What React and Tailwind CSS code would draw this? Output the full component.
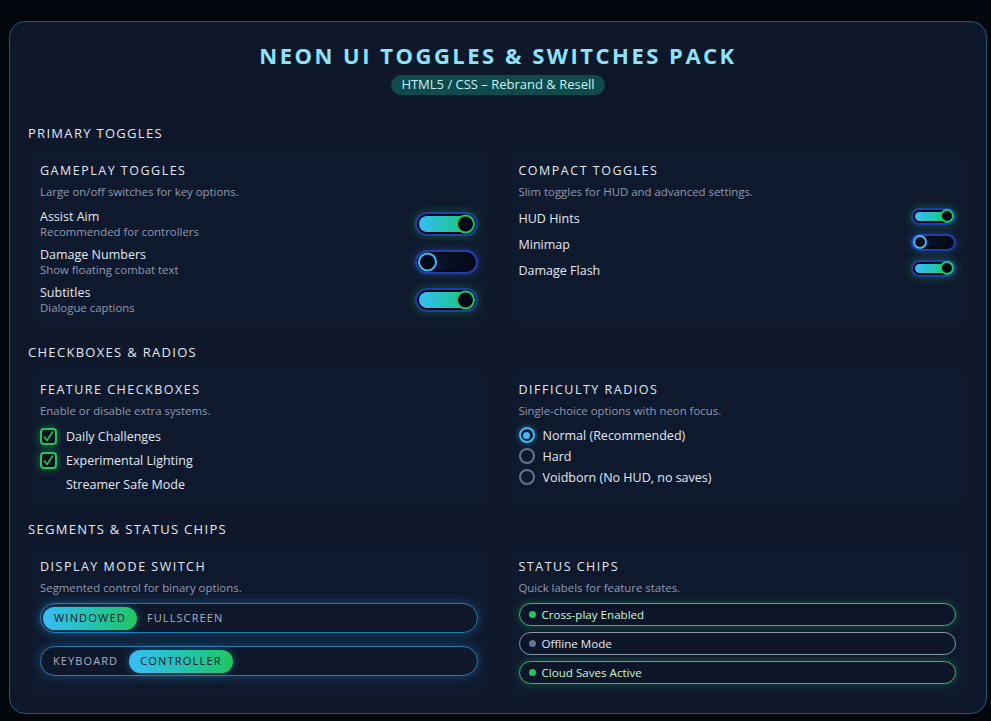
import React from "react";

const font = { fontFamily: '"Open Sans", "Noto Sans", sans-serif' };

function BigToggle({ on }) {
  return (
    <div
      className={`relative w-[63px] h-[24px] rounded-full border-2 border-[#1e3fa6] bg-[#030816] p-[2px] shrink-0 ${
        on ? "shadow-[0_0_10px_rgba(34,197,94,0.35)]" : "shadow-[0_0_10px_rgba(56,130,246,0.35)]"
      }`}
    >
      <div
        className={`h-full w-full rounded-full ${
          on ? "bg-gradient-to-r from-[#38bdf8] to-[#22c55e]" : "bg-gradient-to-r from-[#0c1733] to-[#030816]"
        }`}
      />
      <div
        className={`absolute top-1/2 -translate-y-1/2 w-[19px] h-[19px] rounded-full bg-[#020617] border-2 ${
          on ? "right-[1px] border-[#22c55e]" : "left-[1px] border-[#38bdf8]"
        }`}
      />
    </div>
  );
}

function SmallToggle({ on }) {
  return (
    <div
      className={`relative w-[45px] h-[17px] rounded-full border-2 border-[#1e3fa6] bg-[#030816] p-[2px] shrink-0 ${
        on ? "shadow-[0_0_10px_rgba(34,197,94,0.4)]" : "shadow-[0_0_10px_rgba(56,130,246,0.35)]"
      }`}
    >
      <div
        className={`h-full w-full rounded-full ${
          on ? "bg-gradient-to-r from-[#38bdf8] to-[#22c55e]" : "bg-gradient-to-r from-[#0c1733] to-[#030816]"
        }`}
      />
      <div
        className={`absolute top-1/2 -translate-y-1/2 w-[14px] h-[14px] rounded-full bg-[#020617] border-2 ${
          on ? "right-[0px] border-[#22c55e]" : "left-[0px] border-[#38bdf8]"
        }`}
      />
    </div>
  );
}

function SectionTitle({ children, className = "" }) {
  return (
    <div className={`text-[13px] leading-[16px] tracking-[1.3px] text-[#e2e8f0] ${className}`}>{children}</div>
  );
}

function Card({ title, desc, children }) {
  return (
    <div className="rounded-[10px] bg-[#0f192d] px-[12px] pt-[12px] pb-[12px]">
      <div className="mt-[1px] text-[12.5px] leading-[16px] tracking-[1.5px] text-[#e2e8f0]">{title}</div>
      <div className="mt-[5px] text-[11.4px] leading-[15px] text-[#8f9bb0]">{desc}</div>
      <div className="mt-[10px]">{children}</div>
    </div>
  );
}

function Check({ on }) {
  return (
    <div
      className={`w-[17px] h-[17px] rounded-[4px] border-2 flex items-center justify-center shrink-0 ${
        on
          ? "border-[#22c55e] bg-[#07131c] shadow-[0_0_8px_rgba(34,197,94,0.55)]"
          : "border-transparent"
      }`}
    >
      {on && (
        <svg width="11" height="11" viewBox="0 0 11 11" fill="none">
          <path d="M1.5 6 L4 9.5 L9.5 1" stroke="#22c55e" strokeWidth="1.5" strokeLinecap="round" strokeLinejoin="round" />
        </svg>
      )}
    </div>
  );
}

function Radio({ on }) {
  return (
    <div
      className={`w-[16px] h-[16px] rounded-full border-2 flex items-center justify-center shrink-0 ${
        on ? "border-[#38bdf8] shadow-[0_0_6px_rgba(56,189,248,0.5)]" : "border-[#64748b]"
      }`}
    >
      {on && <div className="w-[7px] h-[7px] rounded-full bg-[#38bdf8]" />}
    </div>
  );
}

function Chip({ on, children }) {
  return (
    <div
      className={`h-[23px] rounded-full border flex items-center pl-[9px] gap-[6px] bg-[#0d1628] ${
        on
          ? "border-[#22c55e] shadow-[0_0_9px_rgba(34,197,94,0.35)] text-[#c9f7d6]"
          : "border-[#8a97ab] text-[#e2e8f0]"
      }`}
    >
      <div className={`w-[7px] h-[7px] rounded-full ${on ? "bg-[#22c55e]" : "bg-[#64748b]"}`} />
      <span className="text-[11.6px] leading-[14px]">{children}</span>
    </div>
  );
}

function Segment({ items, active }) {
  return (
    <div className="h-[30px] rounded-full border border-[#2279b5] bg-[#0f172a] shadow-[0_0_12px_rgba(56,160,248,0.35)] flex items-center pl-[2px]">
      {items.map((it, i) =>
        i === active ? (
          <div
            key={it}
            className={`h-[23px] rounded-full px-[11px] flex items-center bg-gradient-to-r from-[#38bdf8] to-[#22c55e] text-[#0b1424] text-[11px] tracking-[1.2px] shadow-[0_0_8px_rgba(56,189,248,0.4)] ${
              i > 0 ? "ml-[1px]" : ""
            }`}
          >
            {it}
          </div>
        ) : (
          <div key={it} className="h-[23px] px-[10px] flex items-center text-[#a7b2c4] text-[11px] tracking-[1.1px]">
            {it}
          </div>
        )
      )}
    </div>
  );
}

export default function App() {
  return (
    <div className="min-h-[721px] w-full bg-[#03050c] pt-[21px] pl-[9px] pr-[4px] pb-[8px]" style={font}>
      <div className="w-[978px] rounded-[16px] border border-[#1f5878] bg-[#0f172b] px-[18px] pt-[20px] pb-[17px]">
        <div className="flex flex-col items-center">
          <div className="text-[22px] leading-[26px] font-bold tracking-[2.5px] text-[#8be3fd]">
            NEON UI TOGGLES &amp; SWITCHES PACK
          </div>
          <div className="mt-[7px] h-[20px] rounded-full bg-[#0f4a4c] px-[10px] flex items-center text-[13px] text-[#c5f3f5]">
            HTML5 / CSS – Rebrand &amp; Resell
          </div>
        </div>

        <SectionTitle className="mt-[30px]">PRIMARY TOGGLES</SectionTitle>
        <div className="mt-[9px] grid grid-cols-2 gap-[17px]">
          <Card title="GAMEPLAY TOGGLES" desc="Large on/off switches for key options.">
            <div className="flex flex-col gap-[8px]">
              {[
                ["Assist Aim", "Recommended for controllers", true],
                ["Damage Numbers", "Show floating combat text", false],
                ["Subtitles", "Dialogue captions", true],
              ].map(([l, s, on]) => (
                <div key={l} className="h-[30px] flex items-center justify-between">
                  <div>
                    <div className="text-[12.5px] leading-[15px] text-[#e2e8f0]">{l}</div>
                    <div className="text-[11.4px] leading-[15px] text-[#8f9bb0]">{s}</div>
                  </div>
                  <BigToggle on={on} />
                </div>
              ))}
            </div>
          </Card>
          <Card title="COMPACT TOGGLES" desc="Slim toggles for HUD and advanced settings.">
            <div className="flex flex-col gap-[6px] -mt-[1px]">
              {[
                ["HUD Hints", true],
                ["Minimap", false],
                ["Damage Flash", true],
              ].map(([l, on]) => (
                <div key={l} className="h-[20px] flex items-center justify-between">
                  <div className="text-[12.5px] leading-[15px] text-[#e2e8f0]">{l}</div>
                  <div className="-mt-[4px]">
                    <SmallToggle on={on} />
                  </div>
                </div>
              ))}
            </div>
          </Card>
        </div>

        <SectionTitle className="mt-[17px]">CHECKBOXES &amp; RADIOS</SectionTitle>
        <div className="mt-[9px] grid grid-cols-2 gap-[17px]">
          <Card title="FEATURE CHECKBOXES" desc="Enable or disable extra systems.">
            <div className="flex flex-col gap-[6px] -mt-[1px]">
              {[
                ["Daily Challenges", true],
                ["Experimental Lighting", true],
                ["Streamer Safe Mode", false],
              ].map(([l, on]) => (
                <div key={l} className="h-[18px] flex items-center gap-[9px]">
                  <Check on={on} />
                  <span className="text-[12.5px] leading-[15px] text-[#e2e8f0]">{l}</span>
                </div>
              ))}
            </div>
          </Card>
          <Card title="DIFFICULTY RADIOS" desc="Single-choice options with neon focus.">
            <div className="flex flex-col gap-[5px] -mt-[1px]">
              {[
                ["Normal (Recommended)", true],
                ["Hard", false],
                ["Voidborn (No HUD, no saves)", false],
              ].map(([l, on]) => (
                <div key={l} className="h-[16px] flex items-center gap-[8px]">
                  <Radio on={on} />
                  <span className="text-[12.5px] leading-[15px] text-[#e2e8f0]">{l}</span>
                </div>
              ))}
            </div>
          </Card>
        </div>

        <SectionTitle className="mt-[16px]">SEGMENTS &amp; STATUS CHIPS</SectionTitle>
        <div className="mt-[9px] grid grid-cols-2 gap-[17px]">
          <Card title="DISPLAY MODE SWITCH" desc="Segmented control for binary options.">
            <div className="flex flex-col gap-[13px] -mt-[2px]">
              <Segment items={["WINDOWED", "FULLSCREEN"]} active={0} />
              <Segment items={["KEYBOARD", "CONTROLLER"]} active={1} />
            </div>
          </Card>
          <Card title="STATUS CHIPS" desc="Quick labels for feature states.">
            <div className="flex flex-col gap-[6px] -mt-[2px]">
              <Chip on>Cross-play Enabled</Chip>
              <Chip on={false}>Offline Mode</Chip>
              <Chip on>Cloud Saves Active</Chip>
            </div>
          </Card>
        </div>
      </div>
    </div>
  );
}
